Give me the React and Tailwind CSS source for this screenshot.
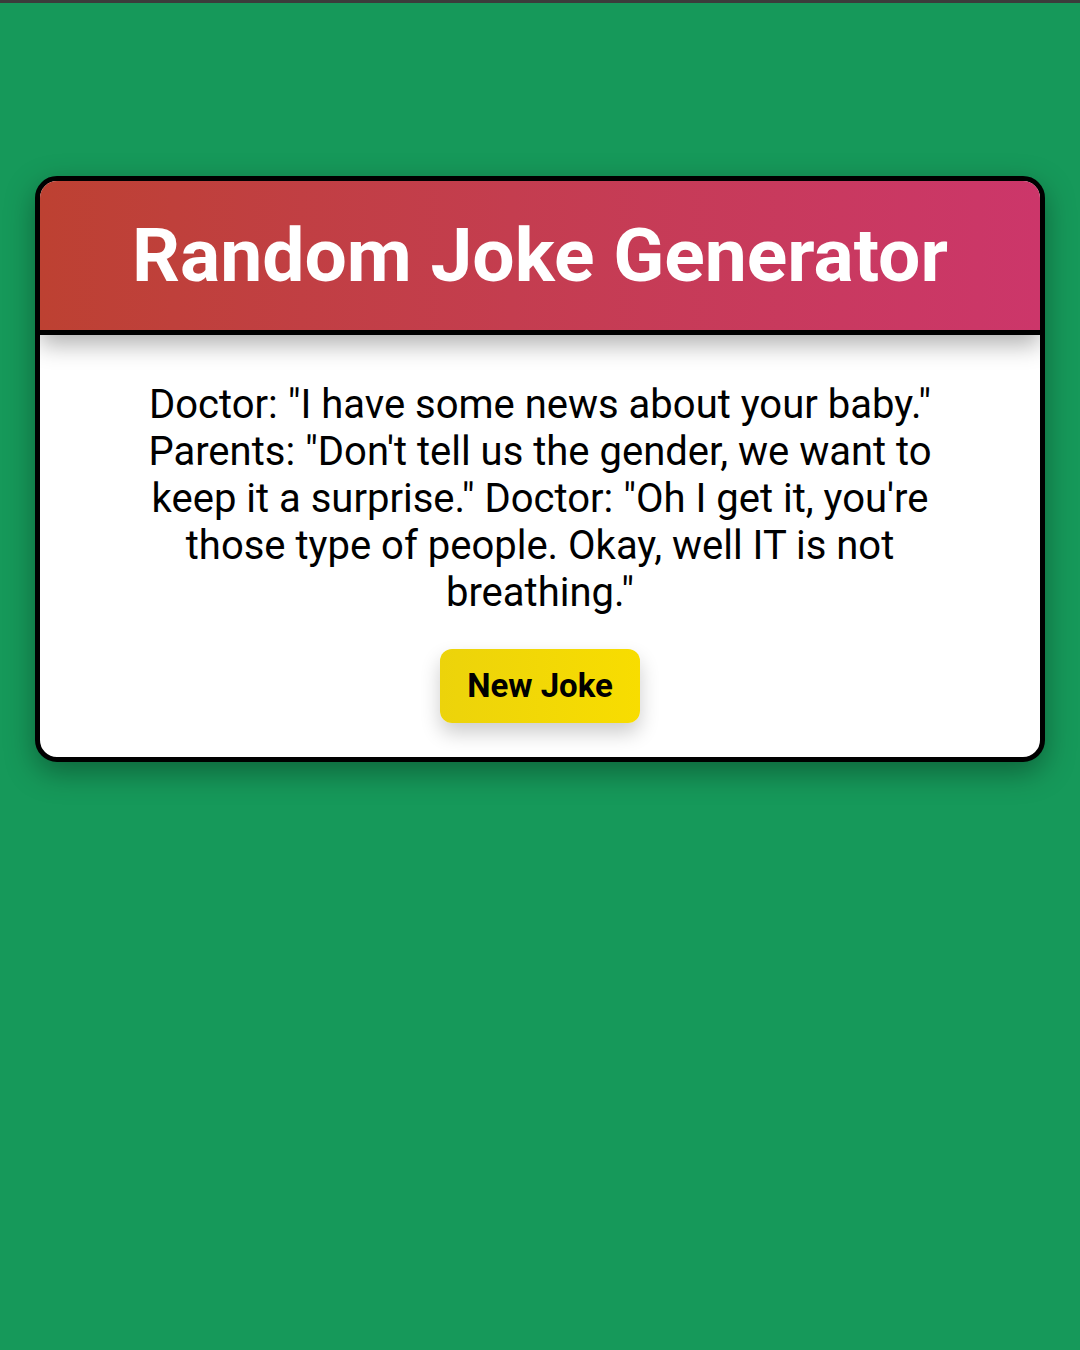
import React, { useState } from 'react';

const jokes = [
  'Doctor: "I have some news about your baby." Parents: "Don\'t tell us the gender, we want to keep it a surprise." Doctor: "Oh I get it, you\'re those type of people. Okay, well IT is not breathing."',
];

function App() {
  const [joke] = useState(jokes[0]);

  return (
    <div className="min-h-[1350px] bg-[#16995a] border-t-[3px] border-[#3b3d3b] px-[35px] pt-[173px] font-['Roboto',sans-serif]">
      <div className="bg-white border-[5px] border-black rounded-[22px] overflow-hidden shadow-[0_10px_30px_rgba(0,0,0,0.35)]">
        <div className="relative z-10 h-[154px] flex items-center justify-center bg-gradient-to-r from-[#bd4132] to-[#cc366a] border-b-[5px] border-black shadow-[0_10px_22px_rgba(0,0,0,0.3)]">
          <h1 className="text-white text-[75px] font-bold leading-none">Random Joke Generator</h1>
        </div>
        <div className="flex flex-col items-center px-[100px] pt-[46px] pb-[34px]">
          <p className="text-black text-[40px] leading-[47px] text-center">{joke}</p>
          <button className="mt-[33px] w-[200px] h-[74px] rounded-[12px] bg-gradient-to-r from-[#ecd30b] to-[#f8dd00] text-black text-[33px] font-bold shadow-[0_10px_20px_rgba(0,0,0,0.2)]">
            New Joke
          </button>
        </div>
      </div>
    </div>
  );
}

export default App;
